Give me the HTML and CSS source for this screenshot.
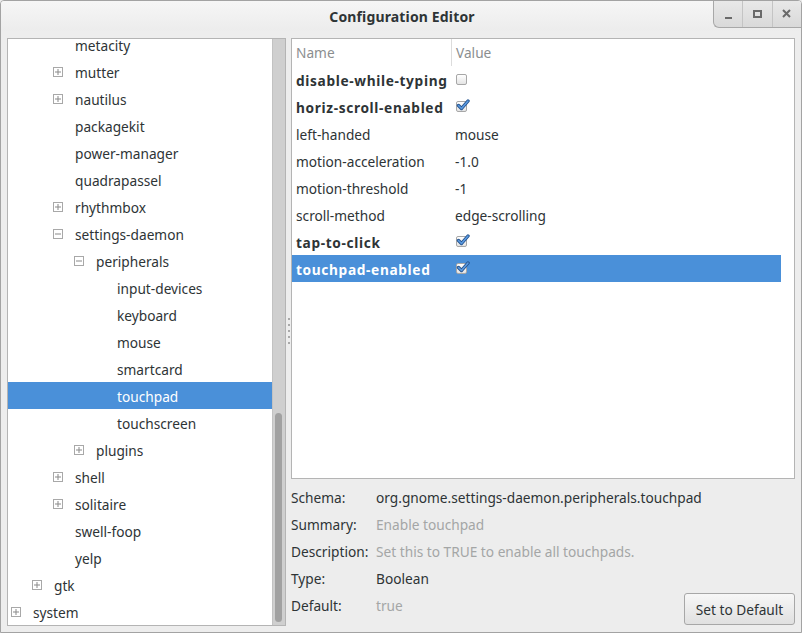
FILE: index.html
```html
<!DOCTYPE html>
<html>
<head>
<meta charset="utf-8">
<link rel="stylesheet" href="styles.css">
</head>
<body>
<div class="window">
  <div class="titlebar">
    <div class="title">Configuration Editor</div>
    <div class="controls">
      <div class="ctl"><span class="min"></span></div>
      <div class="ctl"><span class="max"></span></div>
      <div class="ctl">
        <svg width="9" height="9" viewBox="0 0 9 9"><path d="M1 1 L8 8 M8 1 L1 8" stroke="#6a6a6a" stroke-width="2" fill="none"/></svg>
      </div>
    </div>
  </div>
  <div class="content">
    <div class="leftpane">
      <div class="tree">
        <div class="tree-inner">
          <div class="trow l2"><span class="exp none"></span><span>metacity</span></div>
          <div class="trow l2"><span class="exp plus"></span><span>mutter</span></div>
          <div class="trow l2"><span class="exp plus"></span><span>nautilus</span></div>
          <div class="trow l2"><span class="exp none"></span><span>packagekit</span></div>
          <div class="trow l2"><span class="exp none"></span><span>power-manager</span></div>
          <div class="trow l2"><span class="exp none"></span><span>quadrapassel</span></div>
          <div class="trow l2"><span class="exp plus"></span><span>rhythmbox</span></div>
          <div class="trow l2"><span class="exp minus"></span><span>settings-daemon</span></div>
          <div class="trow l3"><span class="exp minus"></span><span>peripherals</span></div>
          <div class="trow l4"><span class="exp none"></span><span>input-devices</span></div>
          <div class="trow l4"><span class="exp none"></span><span>keyboard</span></div>
          <div class="trow l4"><span class="exp none"></span><span>mouse</span></div>
          <div class="trow l4"><span class="exp none"></span><span>smartcard</span></div>
          <div class="trow l4 sel"><span class="exp none"></span><span>touchpad</span></div>
          <div class="trow l4"><span class="exp none"></span><span>touchscreen</span></div>
          <div class="trow l3"><span class="exp plus"></span><span>plugins</span></div>
          <div class="trow l2"><span class="exp plus"></span><span>shell</span></div>
          <div class="trow l2"><span class="exp plus"></span><span>solitaire</span></div>
          <div class="trow l2"><span class="exp none"></span><span>swell-foop</span></div>
          <div class="trow l2"><span class="exp none"></span><span>yelp</span></div>
          <div class="trow l1"><span class="exp plus"></span><span>gtk</span></div>
          <div class="trow l0"><span class="exp plus"></span><span>system</span></div>
        </div>
      </div>
      <div class="trough"><div class="thumb"></div></div>
    </div>
    <div class="handle"><i></i><i></i><i></i><i></i><i></i></div>
    <div class="rightcol">
      <div class="keys">
        <div class="krow head"><div class="kname">Name</div><div class="kval">Value</div></div>
        <div class="krow"><div class="kname b">disable-while-typing</div><div class="kval"><span class="cb"></span></div></div>
        <div class="krow"><div class="kname b">horiz-scroll-enabled</div><div class="kval"><span class="cb on"><svg width="14" height="12" viewBox="0 0 14 12"><path d="M2.5 6.5 L5.5 9.5 L12 2" stroke="#24538f" stroke-width="3.4" fill="none" stroke-linecap="round" stroke-linejoin="round"/><path d="M2.5 6.5 L5.5 9.5 L12 2" stroke="#5b9ae0" stroke-width="1.6" fill="none" stroke-linecap="round" stroke-linejoin="round"/></svg></span></div></div>
        <div class="krow"><div class="kname">left-handed</div><div class="kval">mouse</div></div>
        <div class="krow"><div class="kname">motion-acceleration</div><div class="kval">-1.0</div></div>
        <div class="krow"><div class="kname">motion-threshold</div><div class="kval">-1</div></div>
        <div class="krow"><div class="kname">scroll-method</div><div class="kval">edge-scrolling</div></div>
        <div class="krow"><div class="kname b">tap-to-click</div><div class="kval"><span class="cb on"><svg width="14" height="12" viewBox="0 0 14 12"><path d="M2.5 6.5 L5.5 9.5 L12 2" stroke="#24538f" stroke-width="3.4" fill="none" stroke-linecap="round" stroke-linejoin="round"/><path d="M2.5 6.5 L5.5 9.5 L12 2" stroke="#5b9ae0" stroke-width="1.6" fill="none" stroke-linecap="round" stroke-linejoin="round"/></svg></span></div></div>
        <div class="krow sel"><div class="kname b">touchpad-enabled</div><div class="kval"><span class="cb on"><svg width="14" height="12" viewBox="0 0 14 12"><path d="M2.5 6.5 L5.5 9.5 L12 2" stroke="#24538f" stroke-width="3.4" fill="none" stroke-linecap="round" stroke-linejoin="round"/><path d="M2.5 6.5 L5.5 9.5 L12 2" stroke="#5b9ae0" stroke-width="1.6" fill="none" stroke-linecap="round" stroke-linejoin="round"/></svg></span></div></div>
      </div>
      <div class="bottom">
        <div class="info">
          <div class="lbl">Schema:</div><div class="val">org.gnome.settings-daemon.peripherals.touchpad</div>
          <div class="lbl">Summary:</div><div class="val dim">Enable touchpad</div>
          <div class="lbl">Description:</div><div class="val dim">Set this to TRUE to enable all touchpads.</div>
          <div class="lbl">Type:</div><div class="val">Boolean</div>
          <div class="lbl">Default:</div><div class="val dim">true</div>
        </div>
        <button class="btn">Set to Default</button>
      </div>
    </div>
  </div>
</div>
</body>
</html>
```
FILE: styles.css
```css
html, body {
  margin: 0;
  padding: 0;
  background: #ededed;
}
body {
  font-family: "Noto Sans", "DejaVu Sans", sans-serif;
  font-size: 13.7px;
  color: #2e3436;
}
.window {
  width: 802px;
  height: 633px;
  box-sizing: border-box;
  border: 1px solid #a3a3a3;
  border-radius: 4px 4px 0 0;
  background: #ededed;
  display: flex;
  flex-direction: column;
  position: relative;
  overflow: hidden;
}
.titlebar {
  height: 30px;
  flex: none;
  background: linear-gradient(#f6f6f6, #ececec);
  display: flex;
  align-items: center;
  justify-content: center;
}
.title {
  font-weight: bold;
  font-size: 14px;
  letter-spacing: 0.15px;
  color: #2e3436;
  margin-top: 1px;
  margin-left: 2px;
}
.controls {
  position: absolute;
  top: -1px;
  right: 0;
  width: 88px;
  height: 28px;
  box-sizing: border-box;
  border-left: 1px solid #a8a8a8;
  border-bottom: 1px solid #a8a8a8;
  border-bottom-left-radius: 6px;
  background: linear-gradient(#e9e9e9, #d9d9d9);
  display: flex;
}
.ctl {
  flex: 1;
  display: flex;
  align-items: center;
  justify-content: center;
}
.ctl + .ctl { border-left: 1px solid #c4c4c4; }
.min {
  width: 7px;
  height: 2px;
  background: #6a6a6a;
  margin-top: 8px;
}
.max {
  width: 5px;
  height: 4px;
  border: 2px solid #6a6a6a;
}
.content {
  flex: 1;
  display: flex;
  padding: 7px 6px 6px 6px;
  min-height: 0;
}
.leftpane {
  width: 279px;
  flex: none;
  box-sizing: border-box;
  border: 1px solid #b4b4b4;
  display: flex;
  background: #fff;
}
.tree {
  flex: 1;
  overflow: hidden;
  background: #fff;
}
.tree-inner {
  margin-top: -8px;
}
.trow {
  height: 27px;
  display: flex;
  align-items: center;
  white-space: nowrap;
  box-sizing: border-box;
  padding-top: 1px;
}
.trow.l0 { padding-left: 3px; }
.trow.l1 { padding-left: 24px; }
.trow.l2 { padding-left: 45px; }
.trow.l3 { padding-left: 66px; }
.trow.l4 { padding-left: 87px; }
.trow.sel {
  background: #4a90d9;
  color: #fff;
}
.exp {
  width: 10px;
  height: 10px;
  box-sizing: border-box;
  margin-right: 12px;
  flex: none;
  position: relative;
}
.exp.plus, .exp.minus {
  border: 1px solid #a8a8a8;
  background: #fff;
}
.exp.plus::before, .exp.minus::before {
  content: "";
  position: absolute;
  left: 1px;
  right: 1px;
  top: 3px;
  height: 2px;
  background: #8a8a8a;
  transform: scaleY(0.5);
}
.exp.plus::after {
  content: "";
  position: absolute;
  top: 1px;
  bottom: 1px;
  left: 3px;
  width: 2px;
  background: #8a8a8a;
  transform: scaleX(0.5);
}
.trough {
  width: 13px;
  flex: none;
  background: #cfcfcf;
  border-left: 1px solid #c2c2c2;
  box-sizing: border-box;
  display: flex;
  flex-direction: column;
  justify-content: flex-end;
  padding: 0 3px 3px 2px;
}
.thumb {
  height: 209px;
  background: #a1a1a1;
  border-radius: 4px;
}
.handle {
  width: 5px;
  flex: none;
  display: flex;
  flex-direction: column;
  align-items: center;
  justify-content: center;
  gap: 4px;
  padding-bottom: 2px;
  box-sizing: border-box;
}
.handle i {
  width: 2px;
  height: 2px;
  background: #a9a9a9;
  display: block;
}
.rightcol {
  flex: 1;
  display: flex;
  flex-direction: column;
  min-width: 0;
}
.keys {
  height: 441px;
  flex: none;
  box-sizing: border-box;
  border: 1px solid #b4b4b4;
  background: #fff;
}
.krow {
  height: 27px;
  display: flex;
  align-items: center;
  width: calc(100% - 13px);
  white-space: nowrap;
  box-sizing: border-box;
  padding-top: 1px;
}
.krow.head {
  color: #8b8e8f;
  padding-top: 0;
}
.kname {
  width: 159px;
  box-sizing: border-box;
  padding-left: 4px;
  flex: none;
}
.kname.b {
  font-weight: bold;
  letter-spacing: 0.65px;
}
.kval {
  padding-left: 4px;
  flex: 1;
  display: flex;
  align-items: center;
}
.krow.head .kval {
  border-left: 1px solid #dcdcdc;
  height: 100%;
}
.krow.sel {
  background: #4a90d9;
  color: #fff;
}
.cb {
  width: 11px;
  height: 11px;
  box-sizing: border-box;
  border: 1px solid #a7a7a7;
  border-radius: 2px;
  background: linear-gradient(#ffffff, #e4e4e4);
  position: relative;
  display: inline-block;
  margin-left: 1px;
  margin-top: -2px;
}
.cb svg {
  position: absolute;
  left: -1px;
  top: -3px;
}
.bottom {
  flex: 1;
  display: flex;
  align-items: flex-end;
  padding-top: 5px;
}
.info {
  flex: 1;
  min-width: 0;
  align-self: flex-start;
  display: grid;
  grid-template-columns: 85px auto;
  grid-auto-rows: 27px;
  align-items: center;
  white-space: nowrap;
}
.lbl { color: #2e3436; }
.val.dim { color: #a4a6a6; }
.btn {
  flex: none;
  font-family: inherit;
  font-size: 13.7px;
  color: #2e3436;
  width: 111px;
  height: 32px;
  margin-bottom: 1px;
  border: 1px solid #a7a7a7;
  border-radius: 3px;
  background: linear-gradient(#f7f7f7, #e0e0e0);
  padding: 0;
}
```
